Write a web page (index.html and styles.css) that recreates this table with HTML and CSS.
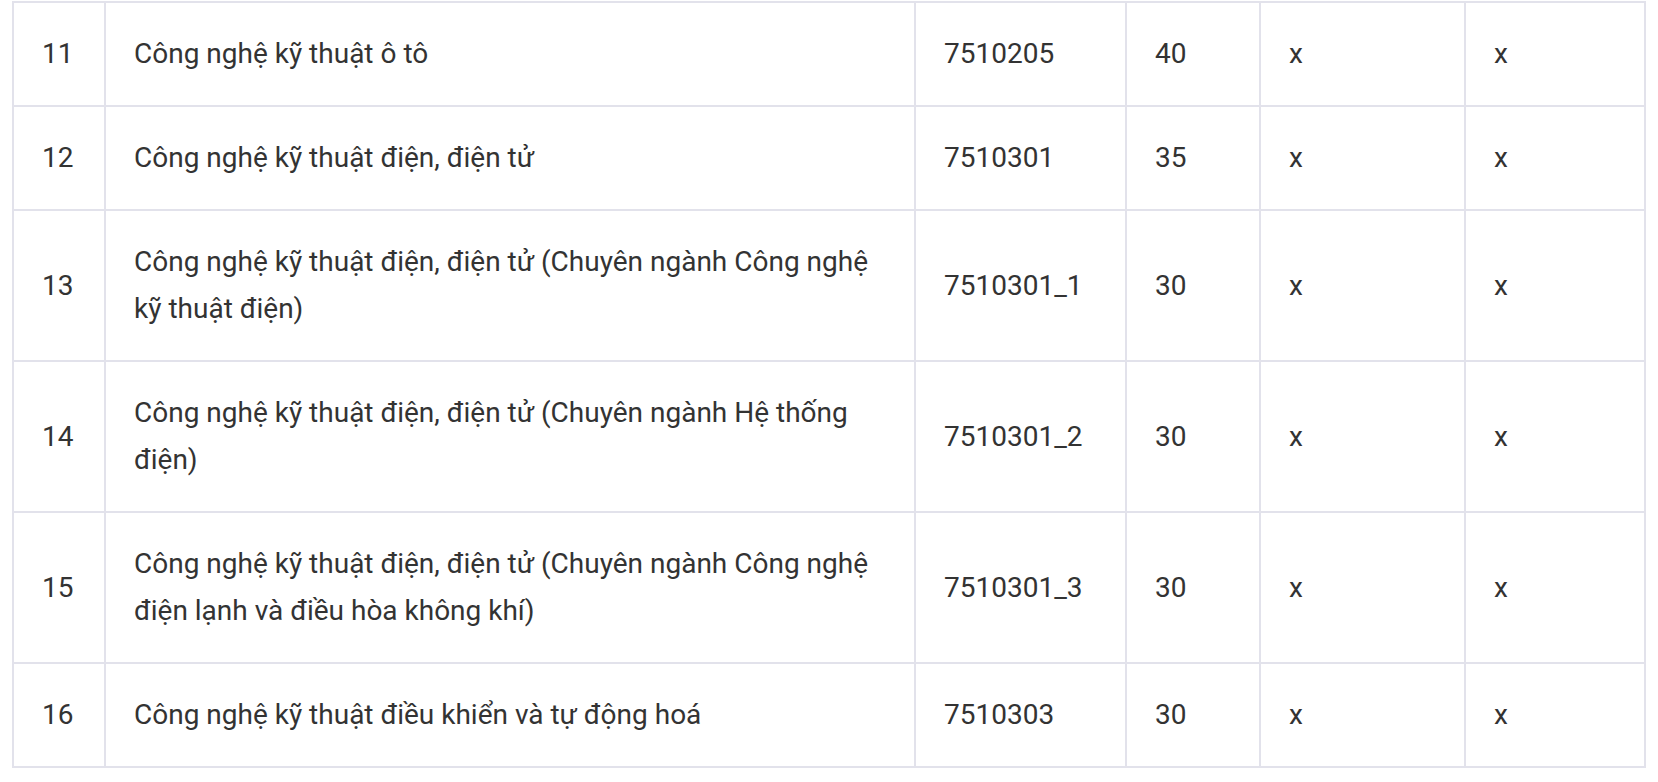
FILE: index.html
```html
<!DOCTYPE html>
<html lang="vi">
<head>
<meta charset="utf-8">
<link rel="stylesheet" href="styles.css">
</head>
<body>
<table class="majors">
  <colgroup>
    <col class="c-no">
    <col class="c-name">
    <col class="c-code">
    <col class="c-quota">
    <col class="c-a">
    <col class="c-b">
  </colgroup>
  <tbody>
    <tr><td>11</td><td>Công nghệ kỹ thuật ô tô</td><td>7510205</td><td>40</td><td>x</td><td>x</td></tr>
    <tr><td>12</td><td>Công nghệ kỹ thuật điện, điện tử</td><td>7510301</td><td>35</td><td>x</td><td>x</td></tr>
    <tr><td>13</td><td>Công nghệ kỹ thuật điện, điện tử (Chuyên ngành Công nghệ kỹ thuật điện)</td><td>7510301_1</td><td>30</td><td>x</td><td>x</td></tr>
    <tr><td>14</td><td>Công nghệ kỹ thuật điện, điện tử (Chuyên ngành Hệ thống điện)</td><td>7510301_2</td><td>30</td><td>x</td><td>x</td></tr>
    <tr><td>15</td><td>Công nghệ kỹ thuật điện, điện tử (Chuyên ngành Công nghệ điện lạnh và điều hòa không khí)</td><td>7510301_3</td><td>30</td><td>x</td><td>x</td></tr>
    <tr><td>16</td><td>Công nghệ kỹ thuật điều khiển và tự động hoá</td><td>7510303</td><td>30</td><td>x</td><td>x</td></tr>
  </tbody>
</table>
</body>
</html>
```
FILE: styles.css
```css
html, body {
  margin: 0;
  padding: 0;
  background: #ffffff;
}

body {
  font-family: Roboto, "Noto Sans", Arial, sans-serif;
  color: #333333;
}

.majors {
  margin: 1px 0 0 12px;
  width: 1634px;
  table-layout: fixed;
  border-collapse: separate;
  border-spacing: 0;
  border-left: 2px solid #e2e2eb;
  border-top: 2px solid #e2e2eb;
}

.c-no { width: 92px; }
.c-name { width: 810px; }
.c-code { width: 211px; }
.c-quota { width: 134px; }
.c-a { width: 205px; }
.c-b { width: 180px; }

.majors td {
  border-right: 2px solid #e2e2eb;
  border-bottom: 2px solid #e2e2eb;
  padding: 27px 26px 28px 28px;
  font-size: 28px;
  line-height: 47px;
  vertical-align: middle;
  text-align: left;
}
```
